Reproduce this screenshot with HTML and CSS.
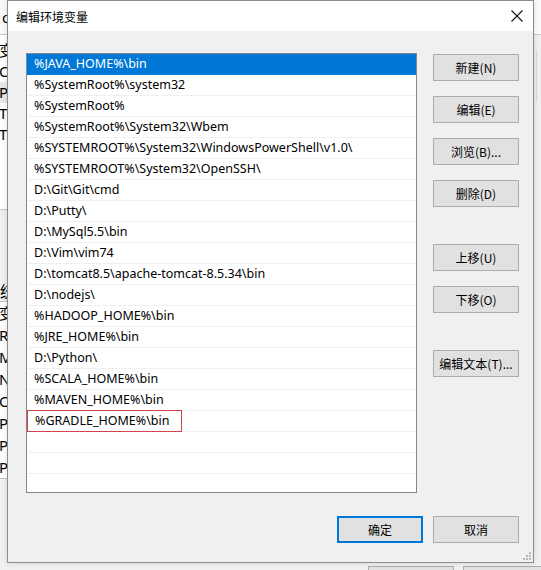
FILE: index.html
```html
<!DOCTYPE html>
<html lang="zh-CN">
<head>
<meta charset="utf-8">
<title>编辑环境变量</title>
<link rel="stylesheet" href="styles.css">
</head>
<body>
<div class="desktop">
  <div class="bg-window">
    <div class="bg-top"><span class="bg-t1">o</span></div>
    <div class="bg-list">
      <div class="bg-row">变</div>
      <div class="bg-row">O</div>
      <div class="bg-row sel">Pa</div>
      <div class="bg-row">TE</div>
      <div class="bg-row">TN</div>
    </div>
    <div class="bg-gap"></div>
    <div class="bg-label">统</div>
    <div class="bg-list2">
      <div class="bg-row">变</div>
      <div class="bg-row">R</div>
      <div class="bg-row">M</div>
      <div class="bg-row">N</div>
      <div class="bg-row">O</div>
      <div class="bg-row">Pa</div>
      <div class="bg-row">PA</div>
      <div class="bg-row">PF</div>
    </div>
    <div class="bg-bottom">
      <span class="bg-btn b1"></span>
      <span class="bg-btn b2"></span>
    </div>
    <span class="bg-vline"></span>
  </div>

  <div class="dialog">
    <div class="titlebar">
      <span class="title">编辑环境变量</span>
      <svg class="close" width="12" height="12" viewBox="0 0 12 12"><path d="M0.5 0.5 L11.5 11.5 M11.5 0.5 L0.5 11.5" stroke="#111" stroke-width="1.1" fill="none"/></svg>
    </div>
    <div class="body">
      <div class="main">
        <div class="list">
          <div class="item selected">%JAVA_HOME%\bin</div>
          <div class="item">%SystemRoot%\system32</div>
          <div class="item">%SystemRoot%</div>
          <div class="item">%SystemRoot%\System32\Wbem</div>
          <div class="item">%SYSTEMROOT%\System32\WindowsPowerShell\v1.0\</div>
          <div class="item">%SYSTEMROOT%\System32\OpenSSH\</div>
          <div class="item">D:\Git\Git\cmd</div>
          <div class="item">D:\Putty\</div>
          <div class="item">D:\MySql5.5\bin</div>
          <div class="item">D:\Vim\vim74</div>
          <div class="item">D:\tomcat8.5\apache-tomcat-8.5.34\bin</div>
          <div class="item">D:\nodejs\</div>
          <div class="item">%HADOOP_HOME%\bin</div>
          <div class="item">%JRE_HOME%\bin</div>
          <div class="item">D:\Python\</div>
          <div class="item">%SCALA_HOME%\bin</div>
          <div class="item">%MAVEN_HOME%\bin</div>
          <div class="item"><span class="mark">%GRADLE_HOME%\bin</span></div>
          <div class="item"></div>
          <div class="item"></div>
          <div class="item"></div>
        </div>
        <div class="side">
          <button class="btn">新建(N)</button>
          <button class="btn">编辑(E)</button>
          <button class="btn">浏览(B)...</button>
          <button class="btn">删除(D)</button>
          <button class="btn group">上移(U)</button>
          <button class="btn">下移(O)</button>
          <button class="btn group">编辑文本(T)...</button>
        </div>
      </div>
      <div class="footer">
        <button class="btn primary">确定</button>
        <button class="btn">取消</button>
      </div>
      <div class="grip">
        <svg width="8" height="8" viewBox="0 0 8 8"><g fill="#b8b8b8"><rect x="6" y="0" width="2" height="2"/><rect x="3" y="3" width="2" height="2"/><rect x="6" y="3" width="2" height="2"/><rect x="0" y="6" width="2" height="2"/><rect x="3" y="6" width="2" height="2"/><rect x="6" y="6" width="2" height="2"/></g></svg>
      </div>
    </div>
  </div>
</div>
</body>
</html>
```
FILE: styles.css
```css
* { box-sizing: border-box; }
html, body { margin: 0; padding: 0; }
body {
  width: 541px;
  height: 570px;
  overflow: hidden;
  background: #f0f0f0;
  font-family: "Noto Sans", "Noto Sans CJK SC", sans-serif;
  font-size: 12px;
  color: #000;
}
.desktop {
  position: relative;
  width: 541px;
  height: 570px;
  overflow: hidden;
}
/* background window (only slivers visible) */
.bg-window {
  position: relative;
  width: 541px;
  height: 570px;
  background: #f0f0f0;
  display: flex;
  flex-direction: column;
}
.bg-top {
  height: 35px;
  background: #fafafa;
  border-bottom: 1px solid #c8c8c8;
  padding: 7px 0 0 2px;
  font-size: 15px;
}
.bg-list,
.bg-gap,
.bg-list2 {
  width: 300px;
}
.bg-list {
  background: #fff;
  padding-top: 5px;
}
.bg-row {
  height: 21px;
  line-height: 21px;
  font-size: 15px;
  margin-left: -1px;
  background: #fff;
}
.bg-row.sel { background: #e8e8e8; }
.bg-gap {
  height: 65px;
  background: #fff;
  border-bottom: 1px solid #c8c8c8;
}
.bg-label {
  width: 300px;
  height: 92px;
  padding-top: 68px;
  line-height: 26px;
  font-size: 15px;
  background: #f0f0f0;
  border-bottom: 1px solid #c8c8c8;
}
.bg-list2 {
  background: #fff;
  border-bottom: 1px solid #c8c8c8;
}
.bg-list2 .bg-row { height: 22px; line-height: 22px; }
.bg-bottom {
  flex: 1;
  position: relative;
}
.bg-btn {
  position: absolute;
  bottom: -20px;
  height: 24px;
  background: #e1e1e1;
  border: 1px solid #adadad;
}
.bg-btn.b1 { left: 368px; width: 86px; }
.bg-btn.b2 { left: 463px; width: 86px; }
.bg-vline {
  position: absolute;
  left: 536px;
  top: 50px;
  width: 1px;
  height: 52px;
  background: #dcdcdc;
}

/* dialog window */
.dialog {
  position: absolute;
  left: 7px;
  top: 0;
  width: 527px;
  height: 563px;
  border: 1px solid #8c8c8c;
  background: #f0f0f0;
  display: flex;
  flex-direction: column;
  box-shadow: 0 0 6px rgba(0,0,0,0.12);
}
.titlebar {
  height: 30px;
  flex: none;
  background: #fff;
  display: flex;
  align-items: center;
  justify-content: space-between;
  padding: 0 10px 0 8px;
}
.title {
  font-family: "Noto Sans CJK SC", sans-serif;
  font-size: 12px;
  color: #000;
}
.close { display: block; }
.body {
  flex: 1;
  position: relative;
  padding: 22px 14px 0 18px;
  display: flex;
  flex-direction: column;
}
.main {
  display: flex;
  gap: 16px;
}
.list {
  width: 391px;
  height: 440px;
  background: #fff;
  border: 1px solid #828790;
  overflow: hidden;
}
.item {
  height: 21px;
  line-height: 20px;
  padding-left: 7px;
  border-bottom: 1px solid #f0f0f0;
  white-space: nowrap;
  font-family: "Noto Sans", sans-serif;
  font-size: 12.5px;
  color: #000;
}
.item.selected {
  background: #0078d7;
  color: #fff;
  border-bottom-color: #0078d7;
}
.item:has(.mark) { padding-left: 0; }
.mark {
  display: inline-block;
  height: 22px;
  margin-top: -1px;
  line-height: 20px;
  padding-left: 7px;
  width: 155px;
  border: 1px solid #d0454c;
}
.side {
  display: flex;
  flex-direction: column;
  width: 86px;
  padding-top: 1px;
}
.btn {
  width: 86px;
  height: 27px;
  padding: 0;
  margin: 0 0 15px 0;
  background: #e1e1e1;
  border: 1px solid #adadad;
  font-family: "Noto Sans CJK SC", sans-serif;
  font-size: 12px;
  color: #000;
  line-height: 25px;
}
.btn.group { margin-top: 22px; }
.footer {
  display: flex;
  justify-content: flex-end;
  gap: 10px;
  margin-top: 23px;
}
.footer .btn { margin: 0; }
.btn.primary {
  border: 2px solid #0078d7;
  line-height: 23px;
}
.grip {
  position: absolute;
  right: 2px;
  bottom: 2px;
  width: 8px;
  height: 8px;
}
.grip svg { display: block; }
```
